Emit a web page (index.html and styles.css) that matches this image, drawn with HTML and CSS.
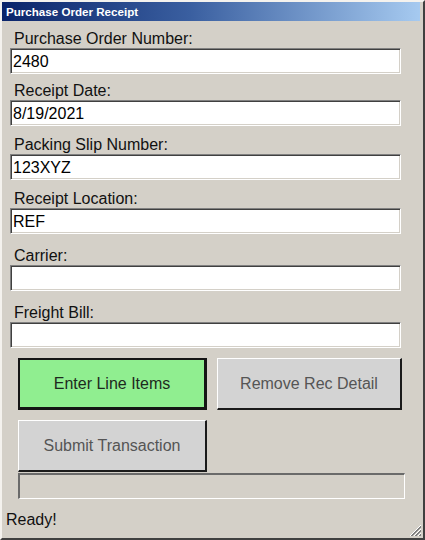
FILE: index.html
```html
<!DOCTYPE html>
<html>
<head>
<meta charset="utf-8">
<title>Purchase Order Receipt</title>
<link rel="stylesheet" href="styles.css">
</head>
<body>
<div class="window">
  <div class="titlebar">Purchase Order Receipt</div>
  <div class="content">
    <div class="field first">
      <label class="label">Purchase Order Number:</label>
      <div class="input">2480</div>
    </div>
    <div class="field">
      <label class="label">Receipt Date:</label>
      <div class="input">8/19/2021</div>
    </div>
    <div class="field gap-m">
      <label class="label">Packing Slip Number:</label>
      <div class="input">123XYZ</div>
    </div>
    <div class="field gap-m">
      <label class="label">Receipt Location:</label>
      <div class="input">REF</div>
    </div>
    <div class="field gap-l">
      <label class="label">Carrier:</label>
      <div class="input"></div>
    </div>
    <div class="field gap-l">
      <label class="label">Freight Bill:</label>
      <div class="input"></div>
    </div>
    <div class="buttons">
      <button class="btn btn-primary">Enter Line Items</button>
      <button class="btn">Remove Rec Detail</button>
      <button class="btn">Submit Transaction</button>
    </div>
    <div class="progress"></div>
  </div>
  <div class="status">Ready!</div>
  <svg class="grip" width="14" height="14" viewBox="0 0 14 14">
    <g stroke-width="1">
      <line x1="13" y1="2" x2="2" y2="13" stroke="#ffffff"/>
      <line x1="13" y1="3" x2="3" y2="13" stroke="#808080"/>
      <line x1="13" y1="4" x2="4" y2="13" stroke="#808080"/>
      <line x1="13" y1="6" x2="6" y2="13" stroke="#ffffff"/>
      <line x1="13" y1="7" x2="7" y2="13" stroke="#808080"/>
      <line x1="13" y1="8" x2="8" y2="13" stroke="#808080"/>
      <line x1="13" y1="10" x2="10" y2="13" stroke="#ffffff"/>
      <line x1="13" y1="11" x2="11" y2="13" stroke="#808080"/>
      <line x1="13" y1="12" x2="12" y2="13" stroke="#808080"/>
    </g>
  </svg>
</div>
</body>
</html>
```

FILE: styles.css
```css
html, body {
  margin: 0;
  padding: 0;
  background: #d4d0c8;
}

body {
  font-family: "Liberation Sans", Arial, sans-serif;
  font-size: 16px;
  color: #111;
}

.window {
  position: relative;
  width: 425px;
  height: 540px;
  box-sizing: border-box;
  background: #d4d0c8;
  border-style: solid;
  border-width: 2px 2px 2px 2px;
  border-color: #f4f2ee #404040 #404040 #f4f2ee;
  overflow: hidden;
}

.titlebar {
  height: 19px;
  margin-right: 3px;
  background: linear-gradient(to right, #0a246a 0%, #3a5fa0 45%, #a6caf0 100%);
  color: #ffffff;
  font-weight: bold;
  font-size: 11.6px;
  line-height: 19px;
  padding-left: 4px;
  white-space: nowrap;
}

.content {
  padding: 8px 0 0 8px;
}

.field {
  margin-top: 7px;
}

.field.first {
  margin-top: 0;
}

.field.gap-m {
  margin-top: 9px;
}

.field.gap-l {
  margin-top: 12px;
}

.label {
  display: block;
  height: 19px;
  line-height: 19px;
  padding-left: 4px;
  color: #111;
}

.input {
  width: 391px;
  height: 26px;
  box-sizing: border-box;
  background: #ffffff;
  border-style: solid;
  border-width: 1px;
  border-color: #808080 #ffffff #ffffff #808080;
  box-shadow: inset 1px 1px 0 #404040, inset -1px -1px 0 #d4d0c8;
  padding: 0 0 0 2px;
  line-height: 25px;
  color: #000;
}

.buttons {
  display: grid;
  grid-template-columns: 189px 185px;
  grid-auto-rows: 52px;
  column-gap: 10px;
  row-gap: 10px;
  margin: 10px 0 0 8px;
}

.btn {
  font-family: "Liberation Sans", Arial, sans-serif;
  font-size: 16px;
  color: #555555;
  background: #d3d3d3;
  border-style: solid;
  border-width: 1px 2px 2px 1px;
  border-color: #ffffff #1a1a1a #1a1a1a #ffffff;
  padding: 0;
  margin: 0;
  box-sizing: border-box;
}

.btn-primary {
  background: #90ee90;
  color: #1e2a1e;
  border-width: 2px 3px 3px 2px;
  border-color: #151515;
}

.progress {
  width: 387px;
  height: 26px;
  box-sizing: border-box;
  margin: 1px 0 0 8px;
  border-style: solid;
  border-width: 2px 1px 1px 2px;
  border-color: #6a6a6a #ffffff #ffffff #6a6a6a;
}

.status {
  margin-top: 11px;
  padding-left: 4px;
  line-height: 19px;
  color: #111;
}

.grip {
  position: absolute;
  right: 1px;
  bottom: 1px;
}
```
